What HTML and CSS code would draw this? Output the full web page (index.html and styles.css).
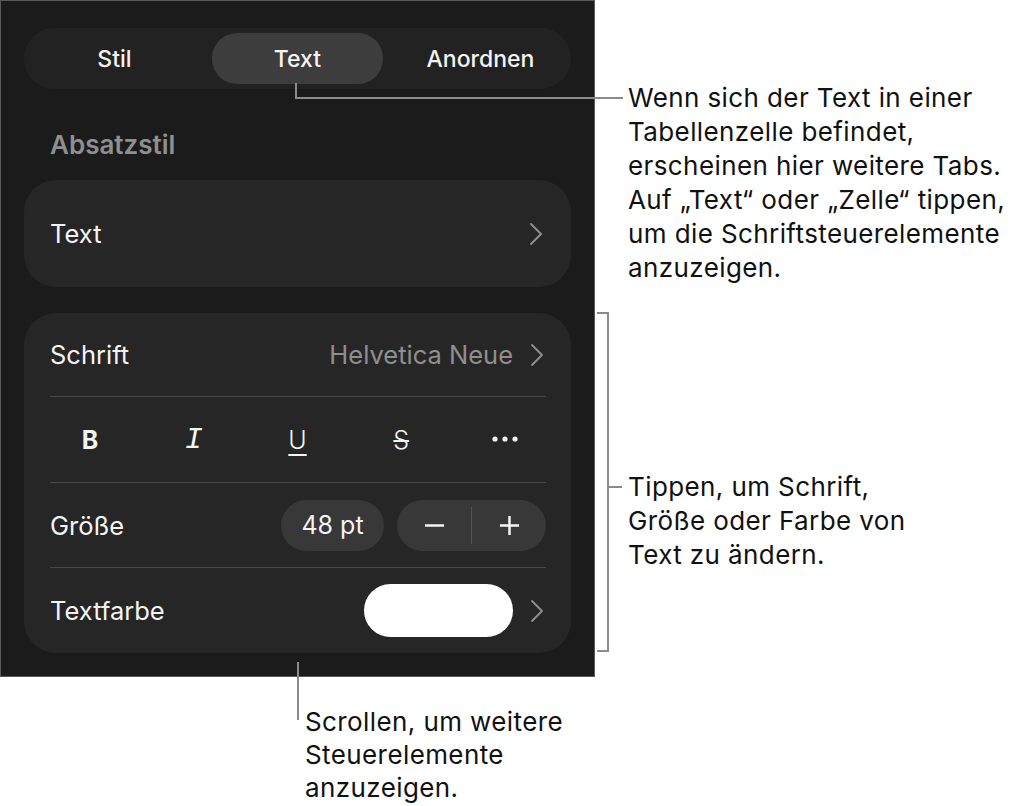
FILE: index.html
```html
<!DOCTYPE html>
<html lang="de">
<head>
<meta charset="utf-8">
<title>Format – Text</title>
<link rel="stylesheet" href="styles.css">
</head>
<body>
<div class="sheet">

  <div class="panel">
    <div class="tabs">
      <span class="tab">Stil</span>
      <span class="tab active">Text</span>
      <span class="tab">Anordnen</span>
    </div>

    <div class="section-title">Absatzstil</div>

    <div class="card card-para">
      <span class="label">Text</span>
      <svg class="chev" viewBox="0 0 14 24"><path d="M2 2 L12 12 L2 22"/></svg>
    </div>

    <div class="card">
      <div class="row row-font">
        <span class="label">Schrift</span>
        <span class="value">Helvetica Neue</span>
        <svg class="chev" viewBox="0 0 14 24"><path d="M2 2 L12 12 L2 22"/></svg>
      </div>
      <div class="row fmt-row">
        <span class="fmt fmt-b">B</span>
        <span class="fmt fmt-i">I</span>
        <span class="fmt fmt-u">U</span>
        <span class="fmt fmt-s">S</span>
        <span class="fmt">
          <svg class="dots" viewBox="0 0 26 6"><circle cx="3" cy="3" r="2.6"/><circle cx="13" cy="3" r="2.6"/><circle cx="23" cy="3" r="2.6"/></svg>
        </span>
      </div>
      <div class="row row-size">
        <span class="label">Größe</span>
        <span class="size">48 pt</span>
        <div class="stepper">
          <span class="step">
            <svg viewBox="0 0 22 22"><path d="M1 11 H21"/></svg>
          </span>
          <span class="step">
            <svg viewBox="0 0 22 22"><path d="M1 11 H21 M11 1 V21"/></svg>
          </span>
        </div>
      </div>
      <div class="row">
        <span class="label">Textfarbe</span>
        <span class="swatch"></span>
        <svg class="chev" viewBox="0 0 14 24"><path d="M2 2 L12 12 L2 22"/></svg>
      </div>
    </div>
  </div>

  <!-- leader lines -->
  <div class="lead tab-down"></div>
  <div class="lead tab-across"></div>
  <div class="lead bracket"></div>
  <div class="lead bracket-tick"></div>
  <div class="lead scroll-down"></div>

  <p class="note note-tabs">Wenn sich der Text in einer<br>Tabellenzelle befindet,<br>erscheinen hier weitere Tabs.<br>Auf „Text“ oder „Zelle“ tippen,<br>um die Schriftsteuerelemente<br>anzuzeigen.</p>
  <p class="note note-font">Tippen, um Schrift,<br>Größe oder Farbe von<br>Text zu ändern.</p>
  <p class="note note-scroll">Scrollen, um weitere<br>Steuerelemente<br>anzuzeigen.</p>

</div>
</body>
</html>
```

FILE: styles.css
```css
* { box-sizing: border-box; }

body {
    margin: 0;
    background: #fff;
    font-family: Inter, "Noto Sans", sans-serif;
}

.sheet {
    position: relative;
    width: 1021px;
    height: 806px;
}

/* dark inspector panel */
.panel {
    width: 595px;
    height: 677px;
    background: #1b1b1b;
    border: 1px solid #5a5a5a;
    padding: 27px 23px 0 23px;
    color: #f4f4f4;
}

.tabs {
    display: grid;
    grid-template-columns: repeat(3, 1fr);
    column-gap: 12px;
    height: 61px;
    padding: 5px;
    border-radius: 31px;
    background: #222;
}
.tab {
    display: flex;
    align-items: center;
    justify-content: center;
    border-radius: 25px;
    font-size: 23px;
    font-weight: 500;
}
.tab.active { background: #3d3d3d; }

.section-title {
    margin: 41px 0 20px 26px;
    line-height: 30px;
    font-size: 26px;
    font-weight: 600;
    color: #8f8f8f;
}

.card {
    background: #262626;
    border-radius: 32px;
    margin-top: 26px;
}
.card-para {
    margin-top: 0;
    height: 107px;
    display: flex;
    align-items: center;
    justify-content: space-between;
    padding: 0 28px 0 26px;
}

.label { font-size: 25.5px; }

.chev {
    width: 14px;
    height: 24px;
    fill: none;
    stroke: #8d8d8d;
    stroke-width: 2;
    stroke-linecap: round;
    stroke-linejoin: round;
}

.row {
    display: flex;
    align-items: center;
    height: 85px;
    margin: 0 25px 0 26px;
    border-bottom: 1px solid #484848;
}
.row-font { height: 84px; }
.row.fmt-row { height: 86px; }
.row:last-child { border-bottom: none; }
.row .chev { margin-right: 2px; }

.value {
    margin-left: auto;
    margin-right: 17px;
    font-size: 25.5px;
    color: #8f8f8f;
}

/* bold / italic / underline / strike / more */
.fmt-row {
    justify-content: space-between;
    padding: 0 26px 0 25px;
}
.fmt {
    width: 30px;
    height: 30px;
    display: flex;
    align-items: center;
    justify-content: center;
    font-size: 25px;
    color: #f4f4f4;
}
.fmt-b { font-weight: 700; }
.fmt-i {
    font-family: "Liberation Mono", monospace;
    font-style: italic;
    font-size: 30px;
}
.fmt-u {
    font-weight: 300;
    text-decoration: underline;
    text-decoration-thickness: 2px;
    text-underline-offset: 5px;
}
.fmt-s {
    font-weight: 300;
    text-decoration: line-through;
    text-decoration-thickness: 2px;
}
.dots {
    width: 26px;
    height: 6px;
    margin-top: -2px;
    fill: #f4f4f4;
}

.size {
    margin-left: auto;
    width: 103px;
    height: 51px;
    border-radius: 26px;
    background: #383838;
    display: flex;
    align-items: center;
    justify-content: center;
    font-size: 25px;
}

.stepper {
    display: flex;
    margin-left: 13px;
    width: 149px;
    height: 51px;
    border-radius: 26px;
    background: #383838;
    padding: 7px 0;
}
.step {
    flex: 1;
    display: flex;
    align-items: center;
    justify-content: center;
}
.step + .step { border-left: 1px solid #555; }
.step svg {
    width: 21px;
    height: 21px;
    fill: none;
    stroke: #f4f4f4;
    stroke-width: 2.6;
}

.swatch {
    margin-left: auto;
    margin-right: 17px;
    width: 149px;
    height: 53px;
    border-radius: 27px;
    background: #fff;
}

/* callout leader lines */
.lead {
    position: absolute;
    border-color: #8b8b8b;
    border-style: solid;
    border-width: 0;
}
.tab-down {
    left: 295px;
    top: 83px;
    width: 2px;
    height: 16px;
    background: #8b8b8b;
}
.tab-across {
    left: 295px;
    top: 97px;
    width: 328px;
    height: 2px;
    background: #8b8b8b;
}
.bracket {
    left: 597px;
    top: 312px;
    width: 12px;
    height: 340px;
    border-width: 2px 2px 2px 0;
}
.bracket-tick {
    left: 609px;
    top: 486px;
    width: 13px;
    height: 2px;
    background: #8b8b8b;
}
.scroll-down {
    left: 297px;
    top: 662px;
    width: 2px;
    height: 58px;
    background: #8b8b8b;
}

.note {
    position: absolute;
    margin: 0;
    font-size: 26px;
    letter-spacing: 0.4px;
    line-height: 34px;
    color: #111;
}
.note-tabs { left: 628px; top: 81px; }
.note-font { left: 628px; top: 470px; }
.note-scroll { left: 305px; top: 705px; line-height: 33px; }
```
